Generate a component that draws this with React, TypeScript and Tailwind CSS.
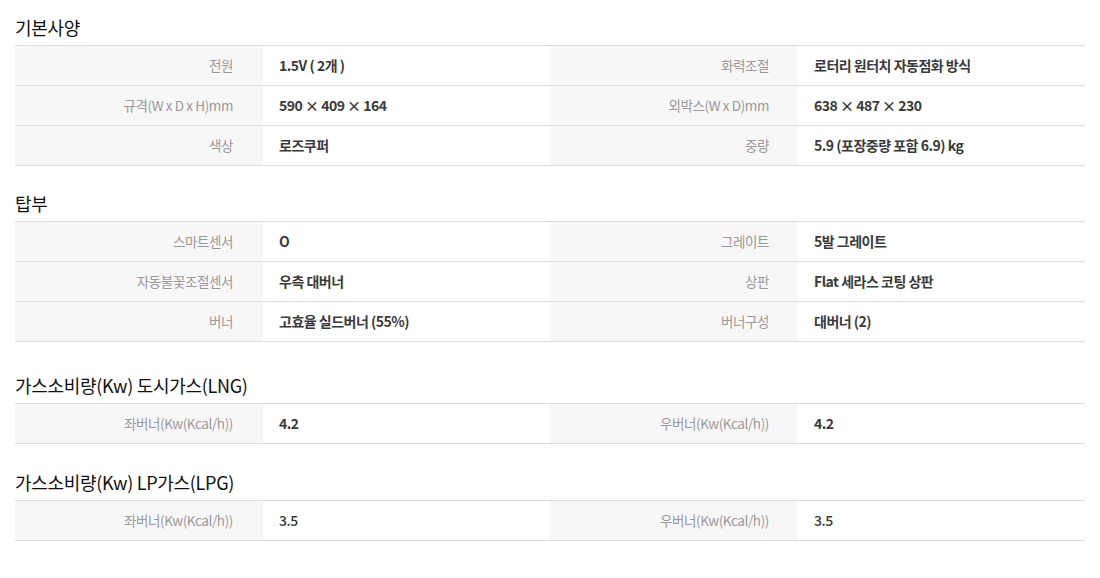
import React from "react";

type Row = [string, string, string, string];

const FONT = { fontFamily: "'Noto Sans CJK KR', 'Noto Sans', sans-serif" };

function Section({
  title,
  rows,
  mt,
  lightLast,
}: {
  title: string;
  rows: Row[];
  mt: string;
  lightLast?: boolean;
}) {
  const val = `flex items-center pl-[16px] text-[14px] text-[#3a3a3a] tracking-[-0.5px] ${
    lightLast ? "font-medium" : "font-semibold"
  }`;
  return (
    <section className={mt}>
      <h2 className="h-[30px] mb-[3px] flex items-center text-[18px] leading-[30px] text-[#111] font-normal tracking-[-0.3px]">
        {title}
      </h2>
      <div className="border-t border-[#dddddd]">
        {rows.map((r, i) => (
          <div
            key={i}
            className="grid grid-cols-[248px_287px_248px_287px] h-[40px] border-b border-[#dddddd]"
          >
            <div className="bg-[#f7f7f7] flex items-center justify-end pr-[30px] text-[13.5px] text-[#999999] tracking-[-0.4px]">
              {r[0]}
            </div>
            <div className={val}>{r[1]}</div>
            <div className="bg-[#f7f7f7] flex items-center justify-end pr-[29px] text-[13.5px] text-[#999999] tracking-[-0.4px]">
              {r[2]}
            </div>
            <div className={val}>{r[3]}</div>
          </div>
        ))}
      </div>
    </section>
  );
}

export default function App() {
  return (
    <div className="w-[1100px] h-[578px] bg-white px-[15px] pt-[12px]" style={FONT}>
      <Section
        title="기본사양"
        mt="mt-0"
        rows={[
          ["전원", "1.5V ( 2개 )", "화력조절", "로터리 원터치 자동점화 방식"],
          ["규격(W x D x H)mm", "590 × 409 × 164", "외박스(W x D)mm", "638 × 487 × 230"],
          ["색상", "로즈쿠퍼", "중량", "5.9 (포장중량 포함 6.9) kg"],
        ]}
      />
      <Section
        title="탑부"
        mt="mt-[22px]"
        rows={[
          ["스마트센서", "O", "그레이트", "5발 그레이트"],
          ["자동불꽃조절센서", "우측 대버너", "상판", "Flat 세라스 코팅 상판"],
          ["버너", "고효율 실드버너 (55%)", "버너구성", "대버너 (2)"],
        ]}
      />
      <Section
        title="가스소비량(Kw) 도시가스(LNG)"
        mt="mt-[28px]"
        rows={[["좌버너(Kw(Kcal/h))", "4.2", "우버너(Kw(Kcal/h))", "4.2"]]}
      />
      <Section
        title="가스소비량(Kw) LP가스(LPG)"
        mt="mt-[23px]"
        lightLast
        rows={[["좌버너(Kw(Kcal/h))", "3.5", "우버너(Kw(Kcal/h))", "3.5"]]}
      />
    </div>
  );
}
